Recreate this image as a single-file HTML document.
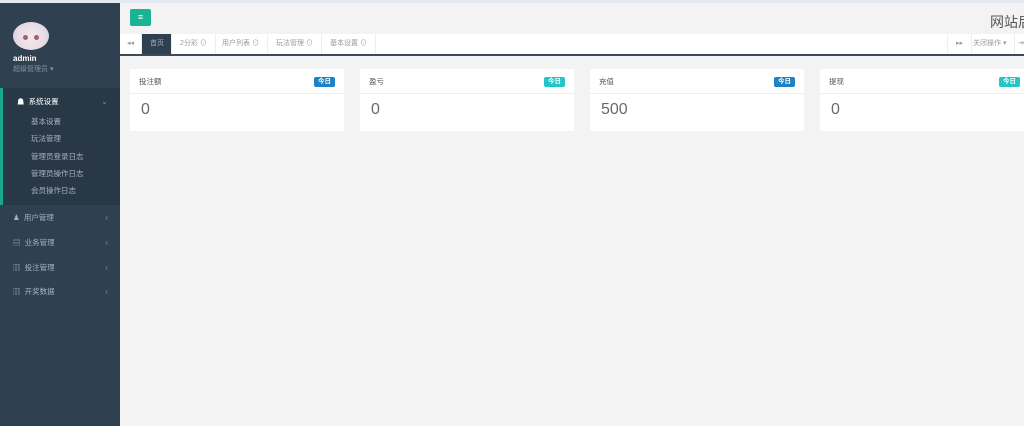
<!DOCTYPE html>
<html><head><meta charset="utf-8"><style>
*{margin:0;padding:0;box-sizing:border-box}
body{width:1024px;height:426px;overflow:hidden;background:#f3f3f4;font-family:"Liberation Sans","Noto Sans CJK SC",sans-serif;font-size:8px;color:#676a6c;position:relative}
.topline{position:absolute;left:0;top:0;width:1024px;height:3px;background:#e4e9ef}
.side{position:absolute;left:0;top:3px;width:120px;height:423px;background:#2f4050}
.av{position:absolute;left:13px;top:19px;width:36px;height:28px;border-radius:50%;background:radial-gradient(circle at 50% 55%,#f4e8ee 0,#e8dde6 55%,#cfc8d8 100%)}
.av:before,.av:after{content:"";position:absolute;top:13px;width:5px;height:5px;border-radius:50%;background:#b05870}
.av:before{left:10px}.av:after{left:21px}
.name{position:absolute;left:13px;top:51px;color:#fff;font-weight:bold;font-size:8px}
.role{position:absolute;left:13px;top:61px;color:#8095a8;font-size:7px}
.act{position:absolute;left:0;top:85px;width:120px;height:117px;background:#293846;border-left:3px solid #19aa8d}
.mi{position:absolute;color:#a7b1c2;font-size:7.5px;white-space:nowrap}
.sub{position:absolute;left:31px;color:#a7b1c2;font-size:7.5px}
.arr{position:absolute;right:12px;color:#8095a8;font-size:8px;margin-top:1px}
.btn{position:absolute;left:130px;top:9px;width:21px;height:17px;background:#1ab394;border-radius:2px;color:#fff;text-align:center;line-height:17px;font-size:9px}
.title{position:absolute;left:990px;top:12px;font-size:14px;color:#555;white-space:nowrap}
.tabs{position:absolute;left:120px;top:34px;width:904px;height:22px;background:#fff;border-bottom:2px solid #3e4a56}
.tab{position:absolute;top:0;height:20px;line-height:20px;font-size:7px;color:#999;border-right:1px solid #eee;padding:0 8px;white-space:nowrap}
.card{position:absolute;top:69px;width:214px;height:62px;background:#fff}
.ch{height:25px;border-bottom:1px solid #eee;padding:0 9px;line-height:25px;font-size:7.5px;color:#555;position:relative}
.lab{position:absolute;right:9px;top:8px;height:10px;line-height:10px;padding:0 4px;color:#fff;font-size:6.5px;border-radius:2px;font-weight:bold}
.cb{padding:7px 11px;font-size:16px;color:#676a6c}
</style></head><body>
<div class="topline"></div>
<div class="side">
<div class="av"></div>
<div class="name">admin</div>
<div class="role">超级管理员 ▾</div>
<div class="act"></div>
<div class="mi" style="left:17px;top:93px;color:#fff">☗&nbsp; 系统设置</div><div class="arr" style="top:93px">⌄</div>
<div class="sub" style="top:113px">基本设置</div>
<div class="sub" style="top:130px">玩法管理</div>
<div class="sub" style="top:148px">管理员登录日志</div>
<div class="sub" style="top:165px">管理员操作日志</div>
<div class="sub" style="top:182px">会员操作日志</div>
<div class="mi" style="left:13px;top:209px">♟&nbsp; 用户管理</div><div class="arr" style="top:209px">‹</div>
<div class="mi" style="left:13px;top:234px">▤&nbsp; 业务管理</div><div class="arr" style="top:234px">‹</div>
<div class="mi" style="left:13px;top:259px">▥&nbsp; 投注管理</div><div class="arr" style="top:259px">‹</div>
<div class="mi" style="left:13px;top:283px">▥&nbsp; 开奖数据</div><div class="arr" style="top:283px">‹</div>
</div>
<div class="btn">≡</div>
<div class="title">网站后</div>
<div class="tabs">
<div class="tab" style="left:0;width:22px;padding:0 7px">◂◂</div>
<div class="tab" style="left:22px;background:#2f4050;color:#aab;width:30px">首页</div>
<div class="tab" style="left:52px">2分彩 ⊙</div>
<div class="tab" style="left:94px">用户列表 ⊙</div>
<div class="tab" style="left:148px">玩法管理 ⊙</div>
<div class="tab" style="left:202px">基本设置 ⊙</div>
<div class="tab" style="left:827px;border-left:1px solid #eee">▸▸</div>
<div class="tab" style="left:845px">关闭操作 ▾</div>
<div class="tab" style="left:890px;border:none">⇥</div>
</div>
<div class="card" style="left:130px"><div class="ch">投注额<span class="lab" style="background:#1c84c6">今日</span></div><div class="cb">0</div></div>
<div class="card" style="left:360px"><div class="ch">盈亏<span class="lab" style="background:#23c6c8">今日</span></div><div class="cb">0</div></div>
<div class="card" style="left:590px"><div class="ch">充值<span class="lab" style="background:#1c84c6">今日</span></div><div class="cb">500</div></div>
<div class="card" style="left:820px"><div class="ch">提现<span class="lab" style="background:#23c6c8;right:14px">今日</span></div><div class="cb">0</div></div>
</body></html>
